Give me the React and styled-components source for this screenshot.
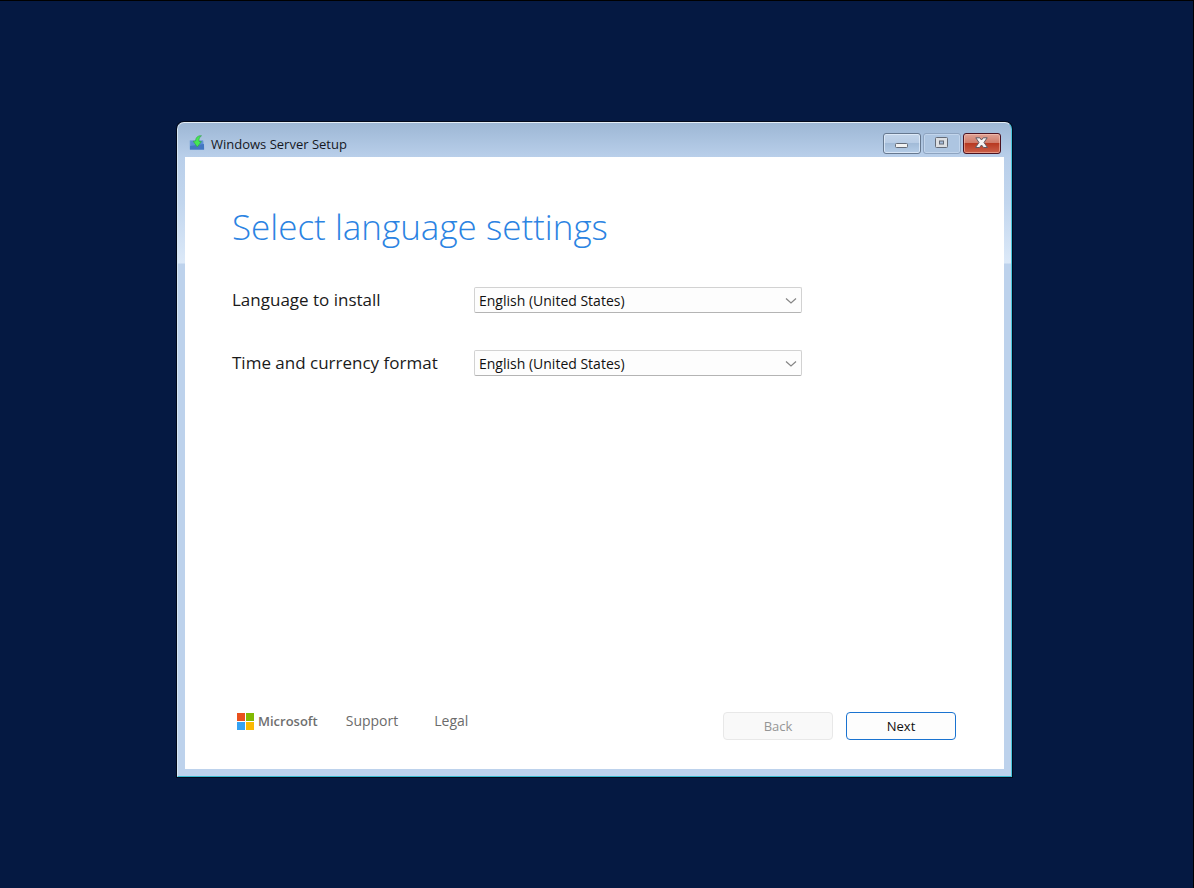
import React from "react";
import styled, { createGlobalStyle, css } from "styled-components";

const GlobalStyle = createGlobalStyle`
  *, *::before, *::after { box-sizing: border-box; }
  body {
    margin: 0;
    background: #051942;
    font-family: "Open Sans", "Noto Sans", sans-serif;
    color: #1a1a1a;
  }
  button, select { font-family: inherit; margin: 0; }
`;

const Desktop = styled.main`
  display: flex;
  min-height: 100vh;
  padding: 121px 181px 111px 177px;
  background: #051942;
  border-top: 1px solid #000;
  border-right: 1px solid #000;
`;

const SetupWindow = styled.section`
  flex: 1;
  min-width: 0;
  display: flex;
  flex-direction: column;
  padding: 0 7px 7px;
  border-style: solid;
  border-width: 1px;
  border-color: #e4edf6 #48c4dc #38b8d0 #d8e8f6;
  border-radius: 7px 7px 0 0;
  box-shadow: 0 0 0 1px #020a1c;
  background: linear-gradient(#9db7d5 0, #b9cfea 34px, #c2d6ee 80px, #dce9f8 140px, #bdd2ec 141px, #bdd2ec 100%);
`;

const TitleBar = styled.header`
  display: flex;
  align-items: center;
  height: 34px;
  padding: 6px 3px 0 4px;
`;

const Title = styled.h1`
  flex: 1;
  margin: 0 0 0 6px;
  padding-top: 2px;
  font-size: 13px;
  line-height: 20px;
  font-weight: 400;
  color: #15181f;
`;

const WindowControls = styled.div`
  display: flex;
  gap: 2px;
`;

const ControlButton = styled.button`
  display: flex;
  align-items: center;
  justify-content: center;
  width: 38px;
  height: 21px;
  padding: 0;
  border: 1px solid #66788f;
  border-radius: 3px;
  background: linear-gradient(#c3d5ea 0, #b8cce5 48%, #a2bbd8 50%, #b5cde8 100%);
  box-shadow: inset 0 0 0 1px rgba(235, 244, 255, 0.65);
  ${({ $tone }) => $tone === "muted" && css`
    border-color: #8ea4c0;
    background: #adc5e1;
    box-shadow: inset 0 0 0 1px rgba(215, 230, 247, 0.5);
  `}
  ${({ $tone }) => $tone === "close" && css`
    border-color: #4a1220;
    background: linear-gradient(#dfa295 0, #cf7a68 48%, #b83a22 50%, #cb604a 100%);
    box-shadow: inset 0 0 0 1px rgba(255, 205, 190, 0.5);
  `}
`;

const Client = styled.form`
  flex: 1;
  display: flex;
  flex-direction: column;
  padding: 42px 48px 29px 47px;
  background: #fff;
`;

const Heading = styled.h2`
  margin: 0 0 32px;
  font-size: 35px;
  line-height: 56px;
  font-weight: 300;
  color: #2b83e2;
`;

const Fields = styled.div`
  display: grid;
  gap: 37px;
`;

const Field = styled.div`
  display: grid;
  grid-template-columns: 242px minmax(0, 328px);
  align-items: center;
`;

const Label = styled.label`
  font-size: 17px;
  line-height: 24px;
`;

const SelectBox = styled.div`
  display: grid;
  align-items: center;

  > * { grid-area: 1 / 1; }
  > svg { justify-self: end; margin-right: 5px; pointer-events: none; }
`;

const Select = styled.select`
  appearance: none;
  width: 100%;
  height: 26px;
  padding: 1px 24px 0 4px;
  border: 1px solid #d2d2d2;
  border-bottom-color: #b4b4b4;
  border-radius: 2px;
  background: #fdfdfd;
  color: #111;
  font-size: 14px;
`;

const Footer = styled.footer`
  display: flex;
  align-items: flex-start;
  justify-content: space-between;
  margin-top: auto;
`;

const FooterLinks = styled.nav`
  display: flex;
  align-items: center;
  padding-left: 5px;
  height: 18px;
`;

const Brand = styled.span`
  display: flex;
  align-items: center;
  gap: 4px;
  margin-right: 28px;
  font-size: 13px;
  line-height: 18px;
  font-weight: 600;
  color: #6f6f6f;
`;

const FooterLink = styled.a`
  margin-right: 36px;
  font-size: 14px;
  line-height: 18px;
  color: #6b6b6b;
  text-decoration: none;
`;

const Actions = styled.div`
  display: flex;
  gap: 13px;
`;

const ActionButton = styled.button`
  width: 110px;
  height: 28px;
  padding: 0;
  border: 1px solid #1a73d0;
  border-radius: 4px;
  background: #fdfdfd;
  color: #111;
  font-size: 13px;

  &:disabled {
    border-color: #e8e8e8;
    background: #f9f9f9;
    color: #959595;
  }
`;

const SetupIcon = () => (
  <svg width="16" height="16" viewBox="0 0 16 16" aria-hidden="true">
    <path d="M1 5.5H14L15 14.5H1Z" fill="#5b8fd6" stroke="#7ba4d8" strokeWidth="0.6" />
    <path d="M1 11L15 9V14.5H1Z" fill="#4377c2" />
    <path
      d="M12.5 0.8C9 0.3 6.6 2.5 6.6 6L4.2 6.2L8.3 12L12.4 6.6L10 6.4C9.8 4 10.4 2 12.5 0.8Z"
      fill="#45e755" stroke="#2fa044" strokeWidth="0.6" strokeLinejoin="round"
    />
  </svg>
);

const MinimizeIcon = () => (
  <svg width="14" height="12" viewBox="0 0 14 12" aria-hidden="true">
    <rect x="0.5" y="6.5" width="12" height="4" rx="1" fill="#f2f2f2" stroke="#646b77" />
  </svg>
);

const MaximizeIcon = () => (
  <svg width="14" height="12" viewBox="0 0 14 12" aria-hidden="true">
    <rect x="0.5" y="0.5" width="12" height="10" rx="1" fill="#dcdfe3" stroke="#646b77" />
    <rect x="4.5" y="4" width="4" height="3" fill="#a4bbd9" stroke="#646b77" />
  </svg>
);

const CloseIcon = () => (
  <svg width="14" height="12" viewBox="0 0 14 12" aria-hidden="true">
    <path
      d="M0.8 0.8H4.8L6.5 3L8.2 0.8H12.2L9 5.5L12.5 10.5H8.5L6.5 8L4.5 10.5H0.5L4 5.5Z"
      fill="#f5f3f3" stroke="#5f5963" strokeLinejoin="round"
    />
  </svg>
);

const Chevron = () => (
  <svg width="12" height="8" viewBox="0 0 12 8" aria-hidden="true">
    <path d="M1 2.5L6 7L11 2.5" fill="none" stroke="#858585" strokeWidth="1.2" />
  </svg>
);

const MicrosoftLogo = () => (
  <svg width="17" height="17" viewBox="0 0 17 17" aria-hidden="true">
    <path d="M0 0H8V8H0Z" fill="#e9501d" />
    <path d="M9 0H17V8H9Z" fill="#82b902" />
    <path d="M0 9H8V17H0Z" fill="#36a3f3" />
    <path d="M9 9H17V17H9Z" fill="#fbb901" />
  </svg>
);

const fields = [
  { id: "language", label: "Language to install" },
  { id: "format", label: "Time and currency format" },
];

export default function App() {
  return (
    <>
      <GlobalStyle />
      <Desktop>
        <SetupWindow>
          <TitleBar>
            <SetupIcon />
            <Title>Windows Server Setup</Title>
            <WindowControls>
              <ControlButton type="button" aria-label="Minimize"><MinimizeIcon /></ControlButton>
              <ControlButton type="button" aria-label="Maximize" $tone="muted"><MaximizeIcon /></ControlButton>
              <ControlButton type="button" aria-label="Close" $tone="close"><CloseIcon /></ControlButton>
            </WindowControls>
          </TitleBar>
          <Client onSubmit={(e) => e.preventDefault()}>
            <Heading>Select language settings</Heading>
            <Fields>
              {fields.map(({ id, label }) => (
                <Field key={id}>
                  <Label htmlFor={id}>{label}</Label>
                  <SelectBox>
                    <Select id={id} defaultValue="en-US">
                      <option value="en-US">English (United States)</option>
                    </Select>
                    <Chevron />
                  </SelectBox>
                </Field>
              ))}
            </Fields>
            <Footer>
              <FooterLinks>
                <Brand><MicrosoftLogo />Microsoft</Brand>
                <FooterLink href="#support">Support</FooterLink>
                <FooterLink href="#legal">Legal</FooterLink>
              </FooterLinks>
              <Actions>
                <ActionButton type="button" disabled>Back</ActionButton>
                <ActionButton type="submit">Next</ActionButton>
              </Actions>
            </Footer>
          </Client>
        </SetupWindow>
      </Desktop>
    </>
  );
}
